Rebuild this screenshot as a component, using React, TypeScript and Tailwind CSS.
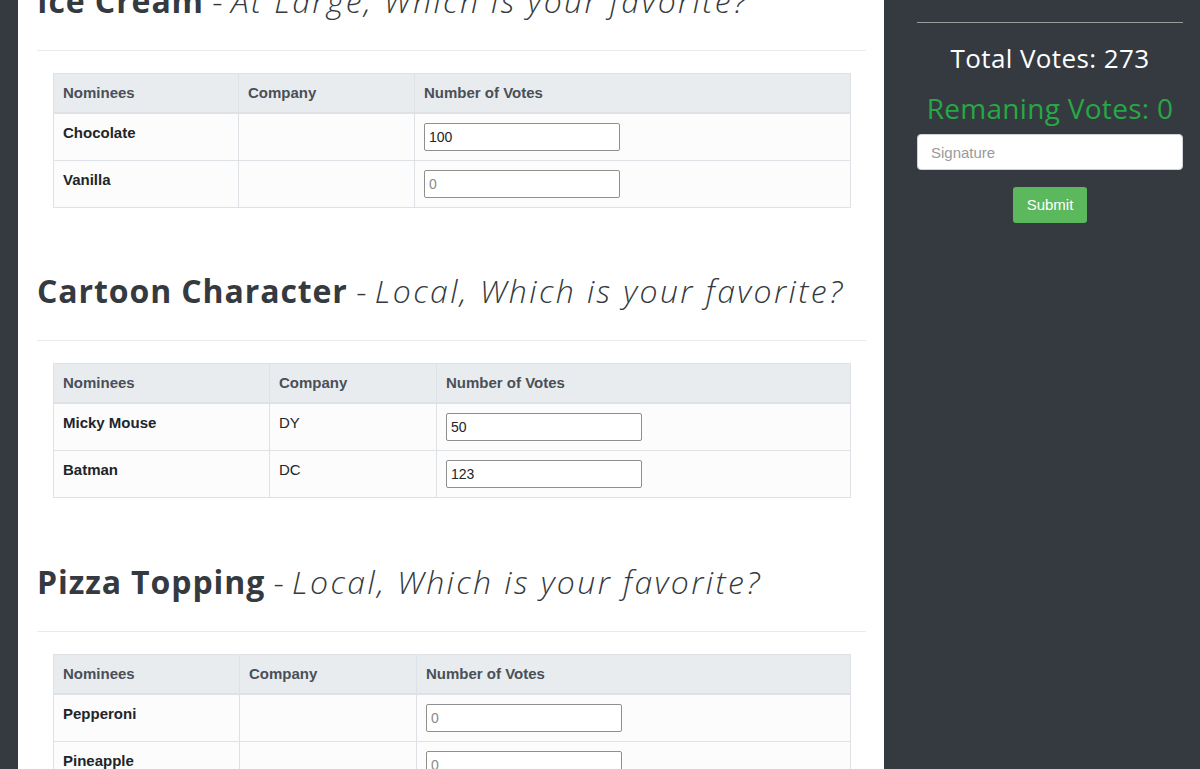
import React from "react";

type Row = { n: string; c: string; v: string };
type Section = { title: string; sub: string; cols: [number, number]; rows: Row[]; gap: string };

const sections: Section[] = [
  {
    title: "Ice Cream",
    sub: "At Large, Which is your favorite?",
    cols: [185, 176],
    gap: "",
    rows: [
      { n: "Chocolate", c: "", v: "100" },
      { n: "Vanilla", c: "", v: "" },
    ],
  },
  {
    title: "Cartoon Character",
    sub: "Local, Which is your favorite?",
    cols: [216, 167],
    gap: "mt-[61px]",
    rows: [
      { n: "Micky Mouse", c: "DY", v: "50" },
      { n: "Batman", c: "DC", v: "123" },
    ],
  },
  {
    title: "Pizza Topping",
    sub: "Local, Which is your favorite?",
    cols: [186, 177],
    gap: "mt-[62px]",
    rows: [
      { n: "Pepperoni", c: "", v: "" },
      { n: "Pineapple", c: "", v: "" },
    ],
  },
];

const head = { fontFamily: '"Open Sans", "Noto Sans", sans-serif' };
const body = { fontFamily: '"Liberation Sans", Arial, sans-serif' };

function VoteTable({ s }: { s: Section }) {
  return (
    <table
      className="w-full border-collapse text-[15px] leading-[20px] table-fixed"
      style={body}
    >
      <colgroup>
        <col style={{ width: s.cols[0] }} />
        <col style={{ width: s.cols[1] }} />
        <col />
      </colgroup>
      <thead>
        <tr className="bg-[#e9ecef]">
          <th className="border border-[#dee2e6] border-b-2 p-[9px] text-left font-bold text-[#495057]">
            Nominees
          </th>
          <th className="border border-[#dee2e6] border-b-2 p-[9px] text-left font-bold text-[#495057]">
            Company
          </th>
          <th className="border border-[#dee2e6] border-b-2 p-[9px] text-left font-bold text-[#495057]">
            Number of Votes
          </th>
        </tr>
      </thead>
      <tbody>
        {s.rows.map((r) => (
          <tr key={r.n} className="bg-[#fcfcfc]">
            <td className="border border-[#dee2e6] p-[9px] align-top font-bold text-[#212529]">
              {r.n}
            </td>
            <td className="border border-[#dee2e6] p-[9px] align-top text-[#212529]">
              {r.c}
            </td>
            <td className="border border-[#dee2e6] p-[9px] align-top">
              <input
                type="text"
                defaultValue={r.v}
                placeholder="0"
                className="block w-[196px] h-[28px] border border-[#8f8f8f] rounded-[2px] bg-white px-[4px] text-[14px] text-[#212529] placeholder:text-[#8a8a8a] outline-none"
                style={body}
              />
            </td>
          </tr>
        ))}
      </tbody>
    </table>
  );
}

export default function App() {
  return (
    <div className="flex h-[769px] w-[1200px] overflow-hidden bg-[#343a40]">
      <div className="w-[18px] shrink-0" />
      <main className="w-[866px] shrink-0 bg-white pl-[19px] pr-[18px]">
        <div className="-mt-[21px]">
          {sections.map((s) => (
            <section key={s.title} className={s.gap}>
              <h2
                className="pt-[2px] text-[32px] leading-[40px] text-[#343a40] whitespace-nowrap"
                style={head}
              >
                <span className="font-bold tracking-[0.9px]">{s.title}</span>
                <span className="font-light"> - </span>
                <span className="font-light italic tracking-[2.4px]">{s.sub}</span>
              </h2>
              <hr className="mt-[29px] border-0 border-t border-[#ebebeb]" />
              <div className="mt-[22px] pl-[16px] pr-[15px]">
                <VoteTable s={s} />
              </div>
            </section>
          ))}
        </div>
      </main>
      <aside className="flex-1 pl-[33px] pr-[17px] pt-[22px]">
        <hr className="border-0 border-t border-[#9c9c9c]" />
        <div
          className="mt-[19px] text-center text-[26px] leading-[32px] tracking-[0.4px] text-white"
          style={head}
        >
          Total Votes: 273
        </div>
        <div
          className="mt-[17px] text-center text-[28px] leading-[34px] tracking-[0.3px] text-[#28a745]"
          style={head}
        >
          Remaning Votes: 0
        </div>
        <input
          type="text"
          placeholder="Signature"
          className="mt-[9px] block h-[36px] w-full rounded-[4px] border border-[#ced4da] bg-white px-[13px] text-[15px] text-[#495057] placeholder:text-[#9a9a9a] outline-none"
          style={body}
        />
        <div className="mt-[17px] flex justify-center">
          <button
            className="h-[36px] w-[74px] rounded-[3px] bg-[#5cb85c] text-[15px] text-white"
            style={body}
          >
            Submit
          </button>
        </div>
      </aside>
    </div>
  );
}
